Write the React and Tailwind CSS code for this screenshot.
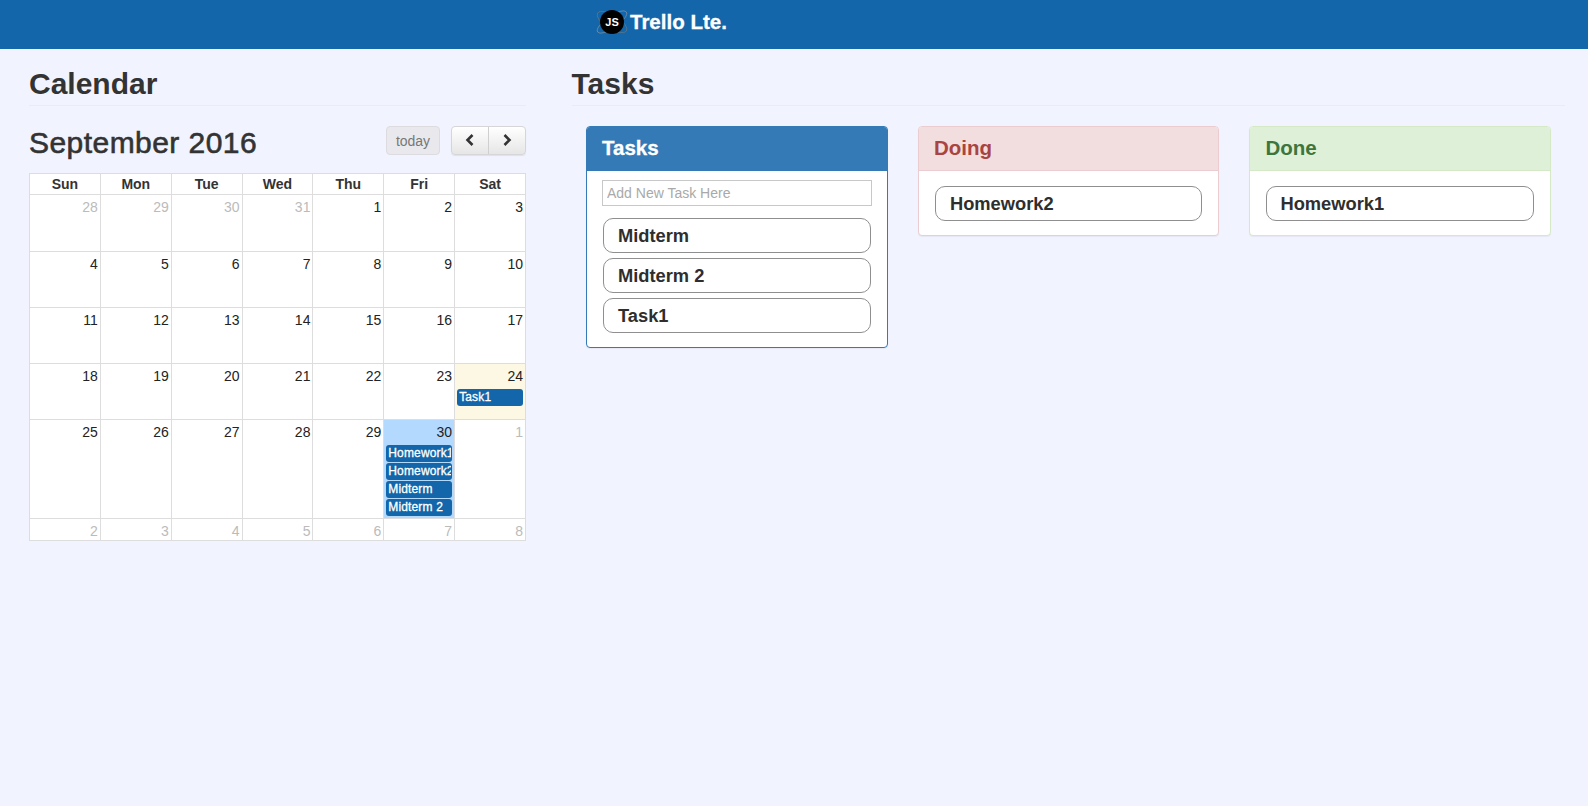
const weeks = [
  { height: "h-[56.5px]", days: [[28, true], [29, true], [30, true], [31, true], [1], [2], [3]] },
  { height: "h-[56px]", days: [[4], [5], [6], [7], [8], [9], [10]] },
  { height: "h-[56.5px]", days: [[11], [12], [13], [14], [15], [16], [17]] },
  { height: "h-[56px]", days: [[18], [19], [20], [21], [22], [23], [24]] },
  { height: "h-[99px]", days: [[25], [26], [27], [28], [29], [30], [1, true]] },
  { height: "h-[21.5px]", days: [[2, true], [3, true], [4, true], [5, true], [6, true], [7, true], [8, true]] },
];

const events = {
  "3-6": ["Task1"],
  "4-5": ["Homework1", "Homework2", "Midterm", "Midterm 2"],
};

const cellBg = {
  "3-6": "bg-[#fcf8e3]",
  "4-5": "bg-[#b3d9ff]",
};

const Logo = () => (
  <svg width="36" height="36" viewBox="0 0 36 36" className="shrink-0">
    <ellipse cx="18" cy="18" rx="17.5" ry="6" fill="none" stroke="#8f99a5" strokeWidth="0.6" transform="rotate(-35 18 18)" />
    <ellipse cx="18" cy="18" rx="17" ry="7" fill="none" stroke="#6f7984" strokeWidth="0.6" transform="rotate(32 18 18)" />
    <circle cx="18" cy="18" r="12" fill="#000" />
    <text x="18" y="22" textAnchor="middle" fill="#fff" fontSize="11" fontWeight="700" fontFamily="Liberation Sans">JS</text>
  </svg>
);

const Calendar = () => (
  <div className="w-[497px] shrink-0">
    <h2 className="text-[30px] leading-[33px] font-bold text-[#333] pt-[18px] pb-[5px] border-b border-[#eaecf2]">Calendar</h2>
    <div className="flex items-start mt-[20px] h-[29px]">
      <h2 className="text-[30px] leading-[33px] tracking-[0.45px] text-[#333] [-webkit-text-stroke:0.6px_#333]">September 2016</h2>
      <button className="ml-auto w-[54px] h-[29px] pt-[2px] rounded-[4px] border border-[#dcdce0] bg-[#e9e9ed] text-[14px] text-[#777]">today</button>
      <div className="flex ml-[11px] h-[29px] rounded-[4px] border border-[#d6d6d8] bg-gradient-to-b from-white to-[#e6e6e6] shadow-[0_1px_1px_rgba(0,0,0,0.08)]">
        <button className="w-[37px] flex items-center justify-center border-r border-[#cfcfd1]">
          <svg width="12" height="14" viewBox="0 0 12 14"><path d="M8.5 2 3.5 7 8.5 12" fill="none" stroke="#333" strokeWidth="2.6" /></svg>
        </button>
        <button className="w-[36px] flex items-center justify-center">
          <svg width="12" height="14" viewBox="0 0 12 14"><path d="M3.5 2 8.5 7 3.5 12" fill="none" stroke="#333" strokeWidth="2.6" /></svg>
        </button>
      </div>
    </div>
    <div className="mt-[18px] border-t border-l border-[#ddd] bg-white text-[14px] leading-[16px]">
      <div className="grid grid-cols-7 h-[21.5px]">
        {["Sun", "Mon", "Tue", "Wed", "Thu", "Fri", "Sat"].map((name) => (
          <div key={name} className="border-r border-b border-[#ddd] text-center font-bold text-[#333] pt-[2px]">{name}</div>
        ))}
      </div>
      {weeks.map((week, w) => (
        <div key={w} className={`grid grid-cols-7 ${week.height}`}>
          {week.days.map(([num, muted], d) => {
            const key = `${w}-${d}`;
            return (
              <div key={key} className={`border-r border-b border-[#ddd] min-w-0 overflow-hidden ${cellBg[key] || ""}`}>
                <div className={`text-right pr-[2px] pt-[4px] h-[20px] ${muted ? "text-[#bbb]" : "text-[#222]"}`}>{num}</div>
                <div className="flex flex-col gap-px px-[2px] mt-[5px]">
                  {(events[key] || []).map((title) => (
                    <div key={title} className="h-[17px] rounded-[3px] bg-[#1266a9] pl-[2px] pr-[1px]">
                      <div className="text-white text-[12px] leading-[16px] tracking-[0.15px] whitespace-nowrap overflow-hidden [-webkit-text-stroke:0.3px_#fff]">{title}</div>
                    </div>
                  ))}
                </div>
              </div>
            );
          })}
        </div>
      ))}
    </div>
  </div>
);

const TaskItem = ({ title }) => (
  <div className="h-[35px] rounded-[10px] border border-[#8f8f8f] bg-white pl-[14px] text-[18.3px] leading-[33px] font-bold text-[#2e2e2e]">{title}</div>
);

const Panel = ({ title, width, frame, head, children }) => (
  <div className={`rounded-[4px] border bg-white overflow-hidden shadow-[0_1px_1px_rgba(0,0,0,0.05)] ${width} ${frame}`}>
    <div className={`h-[44px] text-[20.5px] leading-[41px] font-bold ${head}`}>{title}</div>
    {children}
  </div>
);

export default function App() {
  return (
    <div className="min-h-[806px] bg-[#f1f4fe] font-['Liberation_Sans',Arial,sans-serif]">
      <header className="h-[48.5px] bg-[#1266a9] flex items-center pl-[594px] pb-[5px]">
        <Logo />
        <span className="pt-[2px] text-[20.5px] font-bold text-white [-webkit-text-stroke:0.3px_#fff]">Trello Lte.</span>
      </header>
      <main className="flex pl-[29px]">
        <Calendar />
        <div className="w-[993px] ml-[45.5px]">
          <h2 className="text-[30px] leading-[33px] font-bold text-[#333] pt-[18px] pb-[5px] border-b border-[#eaecf2]">Tasks</h2>
          <div className="flex items-start gap-[30px] pl-[14.5px] mt-[20px]">
            <Panel title="Tasks" width="w-[302px]" frame="border-[#337ab7]" head="pl-[15px] bg-[#337ab7] text-white [-webkit-text-stroke:0.3px_#fff]">
              <div className="px-[15px] pt-[9px] pb-[14px]">
                <input placeholder="Add New Task Here" className="block w-[270px] h-[26px] border border-[#c8c8c8] px-[4px] text-[14px] placeholder:text-[#a9a9a9] outline-none" />
                <div className="flex flex-col gap-[5px] mt-[12px] mx-[1px]">
                  <TaskItem title="Midterm" />
                  <TaskItem title="Midterm 2" />
                  <TaskItem title="Task1" />
                </div>
              </div>
            </Panel>
            <Panel title="Doing" width="w-[300.5px]" frame="border-[#ebccd1]" head="pl-[15px] bg-[#f2dede] text-[#a94442] border-b border-[#ebccd1]">
              <div className="px-[16px] pt-[15px] pb-[14px]">
                <TaskItem title="Homework2" />
              </div>
            </Panel>
            <Panel title="Done" width="w-[302px]" frame="border-[#d6e9c6]" head="pl-[16px] bg-[#dff0d8] text-[#3c763d] border-b border-[#d6e9c6]">
              <div className="px-[16px] pt-[15px] pb-[14px]">
                <TaskItem title="Homework1" />
              </div>
            </Panel>
          </div>
        </div>
      </main>
    </div>
  );
}
